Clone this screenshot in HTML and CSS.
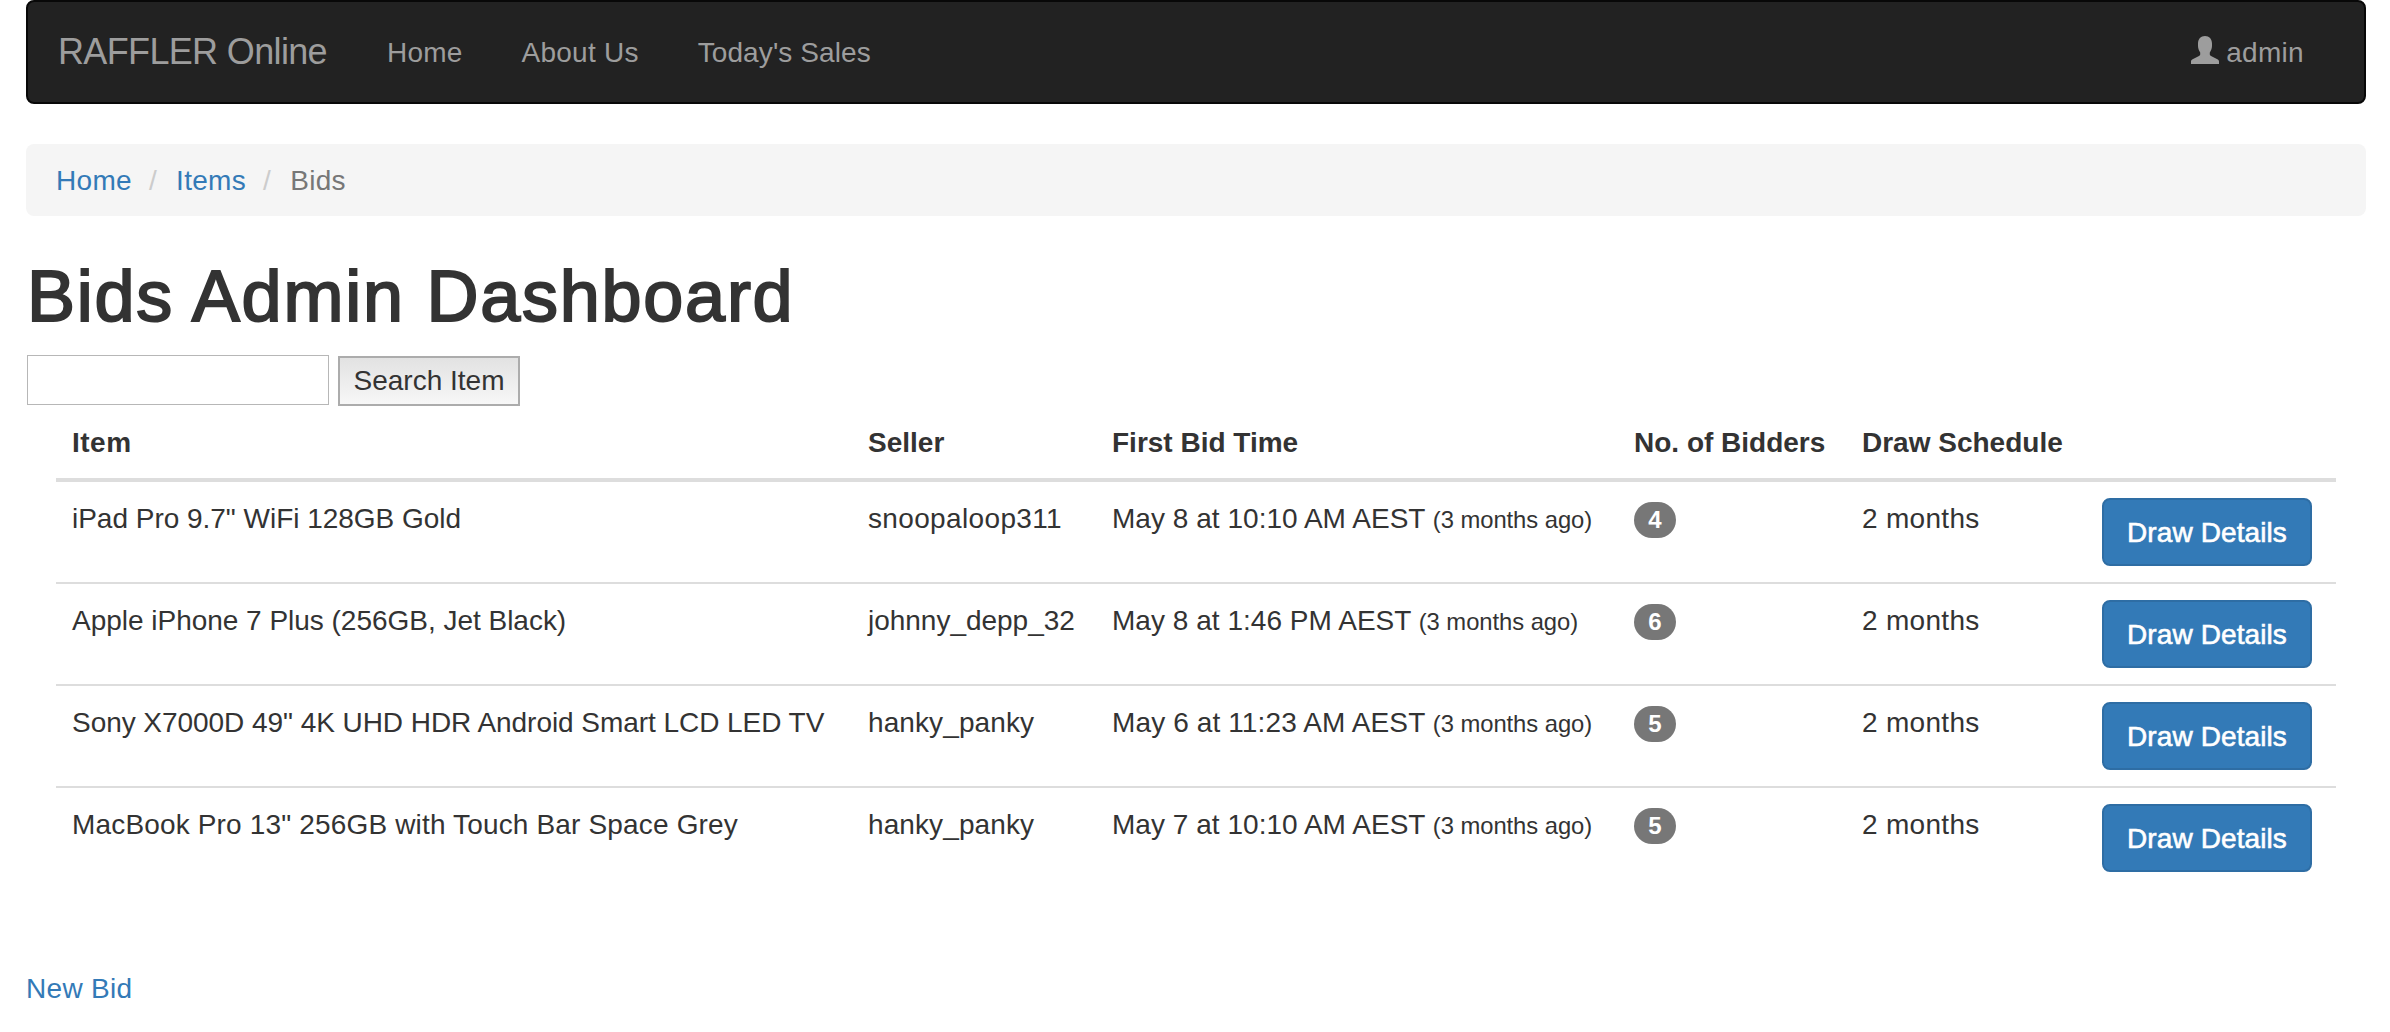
FILE: index.html
```html
<!DOCTYPE html>
<html lang="en">
<head>
<meta charset="utf-8">
<title>Raffler Online - Bids</title>
<link rel="stylesheet" href="styles.css">
</head>
<body>
<div class="container">
  <nav class="navbar">
    <a class="brand" href="#">RAFFLER Online</a>
    <ul class="nav">
      <li><a class="nav-home" href="#">Home</a></li>
      <li><a class="nav-about" href="#">About Us</a></li>
      <li><a class="nav-sales" href="#">Today's Sales</a></li>
    </ul>
    <a class="user" href="#">
      <svg class="user-icon" viewBox="0 0 28 28" aria-hidden="true"><path d="M14 0C9.700 0 7 3 7 7.500V10C7 12.500 8 14.500 9.200 16.500V18.200C9.200 19.200 8.500 19.700 7.500 20.200L1.600 23.300C.5 23.900 0 24.600 0 25.600V28H28V25.600C28 24.600 27.500 23.900 26.400 23.300L20.500 20.200C19.500 19.700 18.800 19.200 18.800 18.200V16.500C20 14.500 21 12.500 21 10V7.500C21 3 18.300 0 14 0Z"/></svg>
      <span>admin</span>
    </a>
  </nav>

  <ol class="breadcrumb">
    <li><a href="#">Home</a></li>
    <li><a href="#">Items</a></li>
    <li class="active">Bids</li>
  </ol>

  <h1 class="title">Bids Admin Dashboard</h1>

  <form class="search">
    <input class="search-input" type="text" aria-label="Search">
    <button class="search-button" type="button">Search Item</button>
  </form>

  <div class="table-wrap">
    <table class="table">
      <colgroup>
        <col class="col-item"><col class="col-seller"><col class="col-time"><col class="col-bidders"><col class="col-draw"><col>
      </colgroup>
      <thead>
        <tr><th class="item-head">Item</th><th>Seller</th><th>First Bid Time</th><th>No. of Bidders</th><th>Draw Schedule</th><th></th></tr>
      </thead>
      <tbody>
        <tr>
          <td class="plain">iPad Pro 9.7" WiFi 128GB Gold</td>
          <td class="loose">snoopaloop311</td>
          <td class="time">May 8 at 10:10 AM AEST <small>(3 months ago)</small></td>
          <td><span class="badge">4</span></td>
          <td class="months">2 months</td>
          <td><a class="btn" href="#">Draw Details</a></td>
        </tr>
        <tr>
          <td class="plain">Apple iPhone 7 Plus (256GB, Jet Black)</td>
          <td class="plain">johnny_depp_32</td>
          <td class="time">May 8 at 1:46 PM AEST <small>(3 months ago)</small></td>
          <td><span class="badge">6</span></td>
          <td class="months">2 months</td>
          <td><a class="btn" href="#">Draw Details</a></td>
        </tr>
        <tr>
          <td class="tight">Sony X7000D 49" 4K UHD HDR Android Smart LCD LED TV</td>
          <td>hanky_panky</td>
          <td class="time time-loose">May 6 at 11:23 AM AEST <small>(3 months ago)</small></td>
          <td><span class="badge">5</span></td>
          <td class="months">2 months</td>
          <td><a class="btn" href="#">Draw Details</a></td>
        </tr>
        <tr>
          <td class="wide">MacBook Pro 13" 256GB with Touch Bar Space Grey</td>
          <td>hanky_panky</td>
          <td class="time">May 7 at 10:10 AM AEST <small>(3 months ago)</small></td>
          <td><span class="badge">5</span></td>
          <td class="months">2 months</td>
          <td><a class="btn" href="#">Draw Details</a></td>
        </tr>
      </tbody>
    </table>
  </div>

  <a class="new-bid" href="#">New Bid</a>
</div>
</body>
</html>
```
FILE: styles.css
```css
*, *::before, *::after { box-sizing: border-box; }

body {
  margin: 0;
  background: #fff;
  color: #333;
  font: 28px/40px "Liberation Sans", Arial, sans-serif;
}

a { color: #337ab7; text-decoration: none; }

.container { margin: 0 24px 0 26px; }

/* Navigation bar */
.navbar {
  display: flex;
  height: 104px;
  padding-right: 30px;
  border: 2px solid #080808;
  border-radius: 8px;
  background: #222;
}
.navbar a { display: block; padding: 31px 30px 29px; color: #9d9d9d; white-space: nowrap; }
.navbar .brand { padding: 30px; font-size: 36px; letter-spacing: -.65px; }
.nav { display: flex; margin: 0; padding: 0; list-style: none; }
.navbar .nav-home { padding-right: 29px; letter-spacing: .2px; }
.navbar .nav-about { padding-right: 29px; letter-spacing: .25px; }
.navbar .nav-sales { letter-spacing: .1px; }
.navbar .user {
  display: flex;
  gap: 7px;
  margin-left: auto;
  letter-spacing: .3px;
}
.user-icon { width: 28px; height: 28px; margin-top: 3px; fill: #9d9d9d; }

/* Breadcrumb */
.breadcrumb {
  display: flex;
  margin: 40px 0;
  padding: 17px 30px 15px;
  border-radius: 8px;
  background: #f5f5f5;
  list-style: none;
  letter-spacing: .3px;
}
.breadcrumb li + li::before {
  content: "/\00a0";
  padding: 0 11px 0 17px;
  color: #ccc;
}
.breadcrumb .active { color: #777; }

.title {
  margin: 0 0 20px;
  padding: 1px 0 0 1px;
  height: 79px;
  font-size: 72px;
  font-weight: 500;
  line-height: 79px;
  letter-spacing: 1.75px;
  -webkit-text-stroke: 2px #333;
}

/* Search form */
.search { display: flex; gap: 9px; height: 51px; padding-left: 1px; }
.search-input {
  width: 302px;
  height: 50px;
  border: 1px solid #b7b7b7;
  border-radius: 0;
  font: inherit;
}
.search-button {
  width: 182px;
  height: 50px;
  margin-top: 1px;
  padding: 0;
  border: 2px solid #acacac;
  border-radius: 0;
  background: linear-gradient(#e2e2e2, #f7f7f7);
  color: #333;
  font: inherit;
  white-space: nowrap;
}

/* Bids table */
.table-wrap { padding: 0 30px; }
.table {
  width: 100%;
  border-collapse: separate;
  border-spacing: 0;
  table-layout: fixed;
  letter-spacing: .1px;
}
.col-item { width: 796px; }
.col-seller { width: 244px; }
.col-time { width: 522px; }
.col-bidders { width: 228px; }
.col-draw { width: 240px; }
.table th, .table td {
  padding: 17px 16px 15px;
  text-align: left;
  vertical-align: top;
  white-space: nowrap;
}
.table th { height: 76px; border-bottom: 4px solid #ddd; letter-spacing: 0; }
.table .item-head { letter-spacing: .5px; }
.table td { height: 102px; border-bottom: 2px solid #ddd; }
.table tbody tr:last-child td { height: 100px; border-bottom: 0; }
.table .loose { letter-spacing: .35px; }
.table .plain { letter-spacing: -.02px; }
.table .tight { letter-spacing: -.05px; }
.table .wide { letter-spacing: .16px; }
.table .time { letter-spacing: .03px; }
.table .time-loose { letter-spacing: .12px; }
.table .months { letter-spacing: .3px; }
small { font-size: 23.8px; letter-spacing: -.05px; }

.badge {
  display: block;
  width: 42px;
  height: 36px;
  margin-top: 3px;
  padding: 6px 0;
  border-radius: 20px;
  background: #777;
  color: #fff;
  font-size: 24px;
  font-weight: bold;
  line-height: 24px;
  text-align: center;
}

.btn {
  display: block;
  width: 210px;
  height: 68px;
  margin: -1px 0 0;
  padding: 13px 0 11px;
  border: 2px solid #2e6da4;
  border-radius: 8px;
  background: #337ab7;
  color: #fff;
  letter-spacing: .1px;
  text-align: center;
  -webkit-text-stroke: .6px #fff;
}

.new-bid { display: block; width: max-content; margin-top: 81px; letter-spacing: .3px; }
```
